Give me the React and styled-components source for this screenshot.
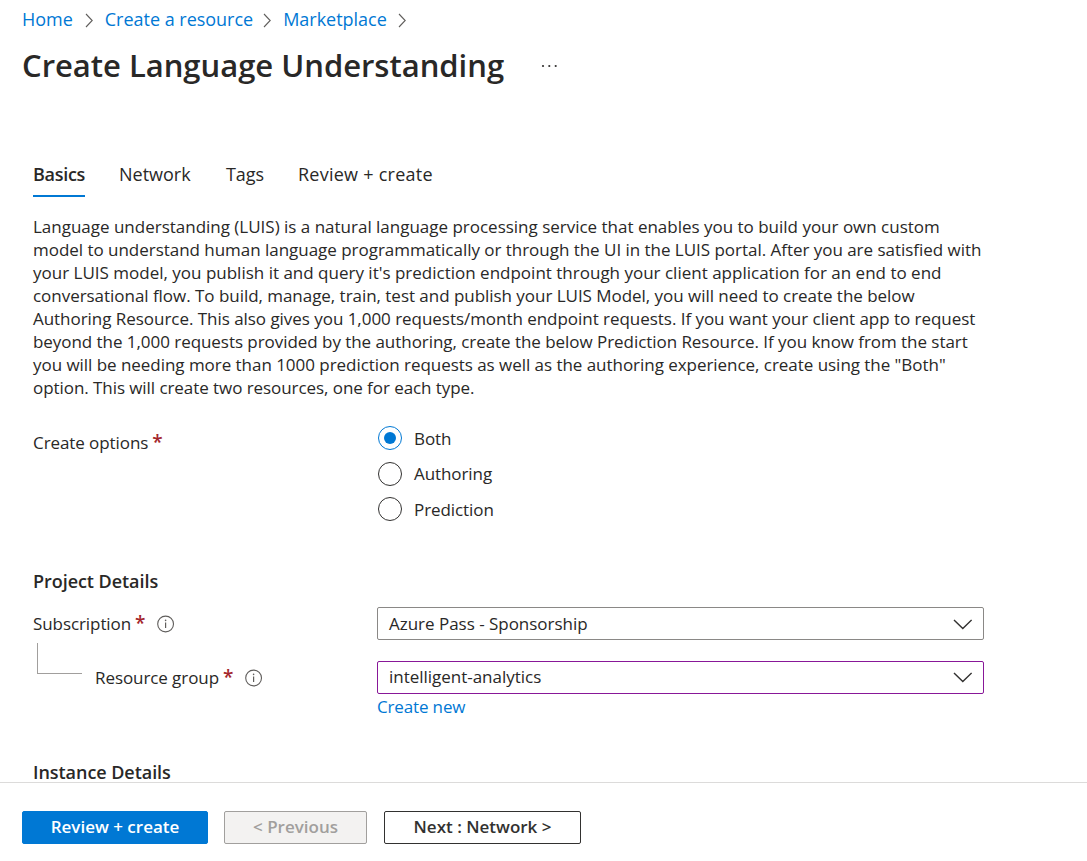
import React, { useState } from "react";
import styled, { createGlobalStyle } from "styled-components";

const Global = createGlobalStyle`
  * { box-sizing: border-box; }
  body {
    margin: 0;
    background: #fff;
    color: #292827;
    font: 400 17px/23px "Open Sans", "Noto Sans", sans-serif;
  }
`;

const Page = styled.div`
  height: 861px;
  display: flex;
  flex-direction: column;
  overflow: hidden;
`;

const Breadcrumb = styled.nav`
  display: flex;
  align-items: center;
  height: 24px;
  margin-top: 7px;
  padding-left: 22px;
  font-size: 18px;
  letter-spacing: -0.02px;
  white-space: nowrap;
`;

const Link = styled.a`
  color: #0078d4;
  text-decoration: none;
  cursor: pointer;
`;

const Separator = styled.svg`
  flex: none;
  width: 8px;
  height: 15px;
  margin: 2px 12px 0 ${(p) => p.$left}px;
  fill: none;
  stroke: #605e5c;
  stroke-width: 1.1;
`;

const TitleBar = styled.div`
  display: flex;
  align-items: center;
  height: 44px;
  margin-top: 12px;
  padding-left: 22px;
`;

const Title = styled.h1`
  margin: 0;
  width: 483px;
  font-size: 31px;
  font-weight: 600;
  line-height: 44px;
  letter-spacing: -0.02px;
  white-space: nowrap;
`;

const MoreIcon = styled.svg`
  width: 20px;
  height: 6px;
  margin: 1px 0 0 35px;
  fill: #323130;
`;

const Content = styled.main`
  flex: 1;
  min-height: 0;
  padding: 75px 0 0 33px;
`;

const Tabs = styled.div`
  display: flex;
  height: 35px;
  gap: 34px;
  font-size: 18px;
  line-height: 24px;
`;

const Tab = styled.div`
  height: 35px;
  width: ${(p) => p.$width}px;
  white-space: nowrap;
  letter-spacing: ${(p) => p.$spacing || 0}px;
  font-weight: ${(p) => (p.$active ? 600 : 400)};
  border-bottom: 2px solid ${(p) => (p.$active ? "#0078d4" : "transparent")};
`;

const Intro = styled.p`
  margin: 18px 0 0;
`;

const IntroLine = styled.span`
  display: block;
  white-space: nowrap;
  letter-spacing: ${(p) => p.$spacing}px;
`;

const Field = styled.div`
  display: flex;
  align-items: flex-start;
  margin-top: ${(p) => p.$top}px;
`;

const Label = styled.div`
  flex: none;
  display: flex;
  align-items: center;
  width: ${(p) => 344 - (p.$indent || 0)}px;
  height: 33px;
  letter-spacing: -0.08px;
  white-space: nowrap;
`;

const Required = styled.span`
  margin: -1px 0 0 4px;
  width: 10px;
  color: #a4262c;
  font-size: 19px;
  font-weight: 600;
`;

const InfoSvg = styled.svg`
  width: 18px;
  height: 18px;
  margin: 1px 0 0 12px;
`;

const RadioGroup = styled.div`
  display: flex;
  flex-direction: column;
  gap: 11.5px;
  margin-left: 1px;
  letter-spacing: -0.08px;
`;

const RadioRow = styled.label`
  display: flex;
  align-items: center;
  gap: 12px;
  height: 24px;
  cursor: pointer;
`;

const RadioMark = styled.span`
  display: grid;
  place-items: center;
  width: 24px;
  height: 24px;
  border: 1px solid ${(p) => (p.$checked ? "#0078d4" : "#323130")};
  border-radius: 50%;

  &::after {
    content: "";
    width: 12px;
    height: 12px;
    border-radius: 50%;
    background: ${(p) => (p.$checked ? "#0078d4" : "transparent")};
  }
`;

const SectionTitle = styled.h2`
  margin: ${(p) => p.$top}px 0 0;
  font-size: 18px;
  font-weight: 600;
  line-height: 24px;
  letter-spacing: -0.05px;
`;

const Branch = styled.div`
  flex: none;
  width: 45px;
  height: 31px;
  margin: -18px 13px 0 4px;
  border: solid #a19f9d;
  border-width: 0 0 1px 1px;
`;

const SelectBox = styled.div`
  display: flex;
  align-items: center;
  justify-content: space-between;
  width: 607px;
  height: 33px;
  padding: 0 11px ${(p) => (p.$edited ? 2 : 0)}px;
  border: 1px solid ${(p) => (p.$edited ? "#881798" : "#8a8886")};
  border-radius: 2px;
  letter-spacing: -0.02px;
`;

const ChevronSvg = styled.svg`
  width: 19px;
  height: 11px;
  margin-top: 1px;
  fill: none;
  stroke: #323130;
  stroke-width: 1.4;
`;

const CreateNew = styled(Link)`
  display: block;
  margin: 1px 0 0 344px;
  letter-spacing: -0.15px;
`;

const Footer = styled.footer`
  flex: none;
  display: flex;
  height: 79px;
  padding: 28px 0 0 22px;
  border-top: 1px solid #dcdbda;
`;

const variants = {
  primary: ["#0078d4", "#0078d4", "#fff"],
  disabled: ["#f3f2f1", "#a19f9d", "#a19f9d"],
  normal: ["#fff", "#323130", "#323130"],
};

const Button = styled.button`
  width: ${(p) => p.$width}px;
  height: 33px;
  margin-right: ${(p) => p.$gap || 0}px;
  padding: 0 0 1px;
  font: inherit;
  font-weight: 600;
  line-height: 30px;
  border-radius: 2px;
  border: 1px solid ${(p) => variants[p.$variant][1]};
  background: ${(p) => variants[p.$variant][0]};
  color: ${(p) => variants[p.$variant][2]};
`;

const Chevron = () => (
  <ChevronSvg viewBox="0 0 19 11">
    <path d="M1 0.9 L9.8 9.6 L18.6 0.9" />
  </ChevronSvg>
);

const Info = () => (
  <InfoSvg viewBox="0 0 18 18">
    <circle cx="8.6" cy="9" r="7.9" fill="none" stroke="#605e5c" strokeWidth="1.1" />
    <path d="M8.6 7.4V13" stroke="#605e5c" strokeWidth="1.2" />
    <circle cx="8.6" cy="5.4" r="0.8" fill="#605e5c" />
  </InfoSvg>
);

const Crumb = ({ children, gap = 11 }) => (
  <>
    <Link>{children}</Link>
    <Separator $left={gap} viewBox="0 0 8 15">
      <path d="M1 1 L7.2 7.5 L1 14" />
    </Separator>
  </>
);

const intro = [
  ["Language understanding (LUIS) is a natural language processing service that enables you to build your own custom", -0.01],
  ["model to understand human language programmatically or through the UI in the LUIS portal. After you are satisfied with", -0.03],
  ["your LUIS model, you publish it and query it's prediction endpoint through your client application for an end to end", 0],
  ["conversational flow. To build, manage, train, test and publish your LUIS Model, you will need to create the below", -0.037],
  ["Authoring Resource. This also gives you 1,000 requests/month endpoint requests. If you want your client app to request", -0.039],
  ["beyond the 1,000 requests provided by the authoring, create the below Prediction Resource. If you know from the start", -0.049],
  ["you will be needing more than 1000 prediction requests as well as the authoring experience, create using the \"Both\"", -0.039],
  ["option. This will create two resources, one for each type.", -0.065],
];

export default function App() {
  const [choice, setChoice] = useState("Both");
  return (
    <Page>
      <Global />
      <Breadcrumb>
        <Crumb gap={12}>Home</Crumb>
        <Crumb gap={10}>Create a resource</Crumb>
        <Crumb>Marketplace</Crumb>
      </Breadcrumb>
      <TitleBar>
        <Title>Create Language Understanding</Title>
        <MoreIcon viewBox="0 0 20 6">
          <circle cx="3" cy="3" r="1.1" />
          <circle cx="9.3" cy="3" r="1.1" />
          <circle cx="15.7" cy="3" r="1.1" />
        </MoreIcon>
      </TitleBar>
      <Content>
        <Tabs>
          <Tab $active $width={52} $spacing={-0.3}>Basics</Tab>
          <Tab $width={73}>Network</Tab>
          <Tab $width={38} $spacing={-0.1}>Tags</Tab>
          <Tab $width={136} $spacing={0.25}>Review + create</Tab>
        </Tabs>
        <Intro>
          {intro.map(([text, spacing]) => (
            <IntroLine key={text} $spacing={spacing}>{text}</IntroLine>
          ))}
        </Intro>
        <Field $top={27}>
          <Label>Create options<Required>*</Required></Label>
          <RadioGroup>
            {["Both", "Authoring", "Prediction"].map((name) => (
              <RadioRow key={name} onClick={() => setChoice(name)}>
                <RadioMark $checked={choice === name} />
                {name}
              </RadioRow>
            ))}
          </RadioGroup>
        </Field>
        <SectionTitle $top={48}>Project Details</SectionTitle>
        <Field $top={14}>
          <Label>Subscription<Required>*</Required><Info /></Label>
          <SelectBox>Azure Pass - Sponsorship<Chevron /></SelectBox>
        </Field>
        <Field $top={21}>
          <Branch />
          <Label $indent={62}>Resource group<Required>*</Required><Info /></Label>
          <SelectBox $edited>intelligent-analytics<Chevron /></SelectBox>
        </Field>
        <CreateNew>Create new</CreateNew>
        <SectionTitle $top={42}>Instance Details</SectionTitle>
      </Content>
      <Footer>
        <Button $variant="primary" $width={186} $gap={16}>Review + create</Button>
        <Button $variant="disabled" $width={143} $gap={17}>&lt; Previous</Button>
        <Button $variant="normal" $width={197}>Next : Network &gt;</Button>
      </Footer>
    </Page>
  );
}
